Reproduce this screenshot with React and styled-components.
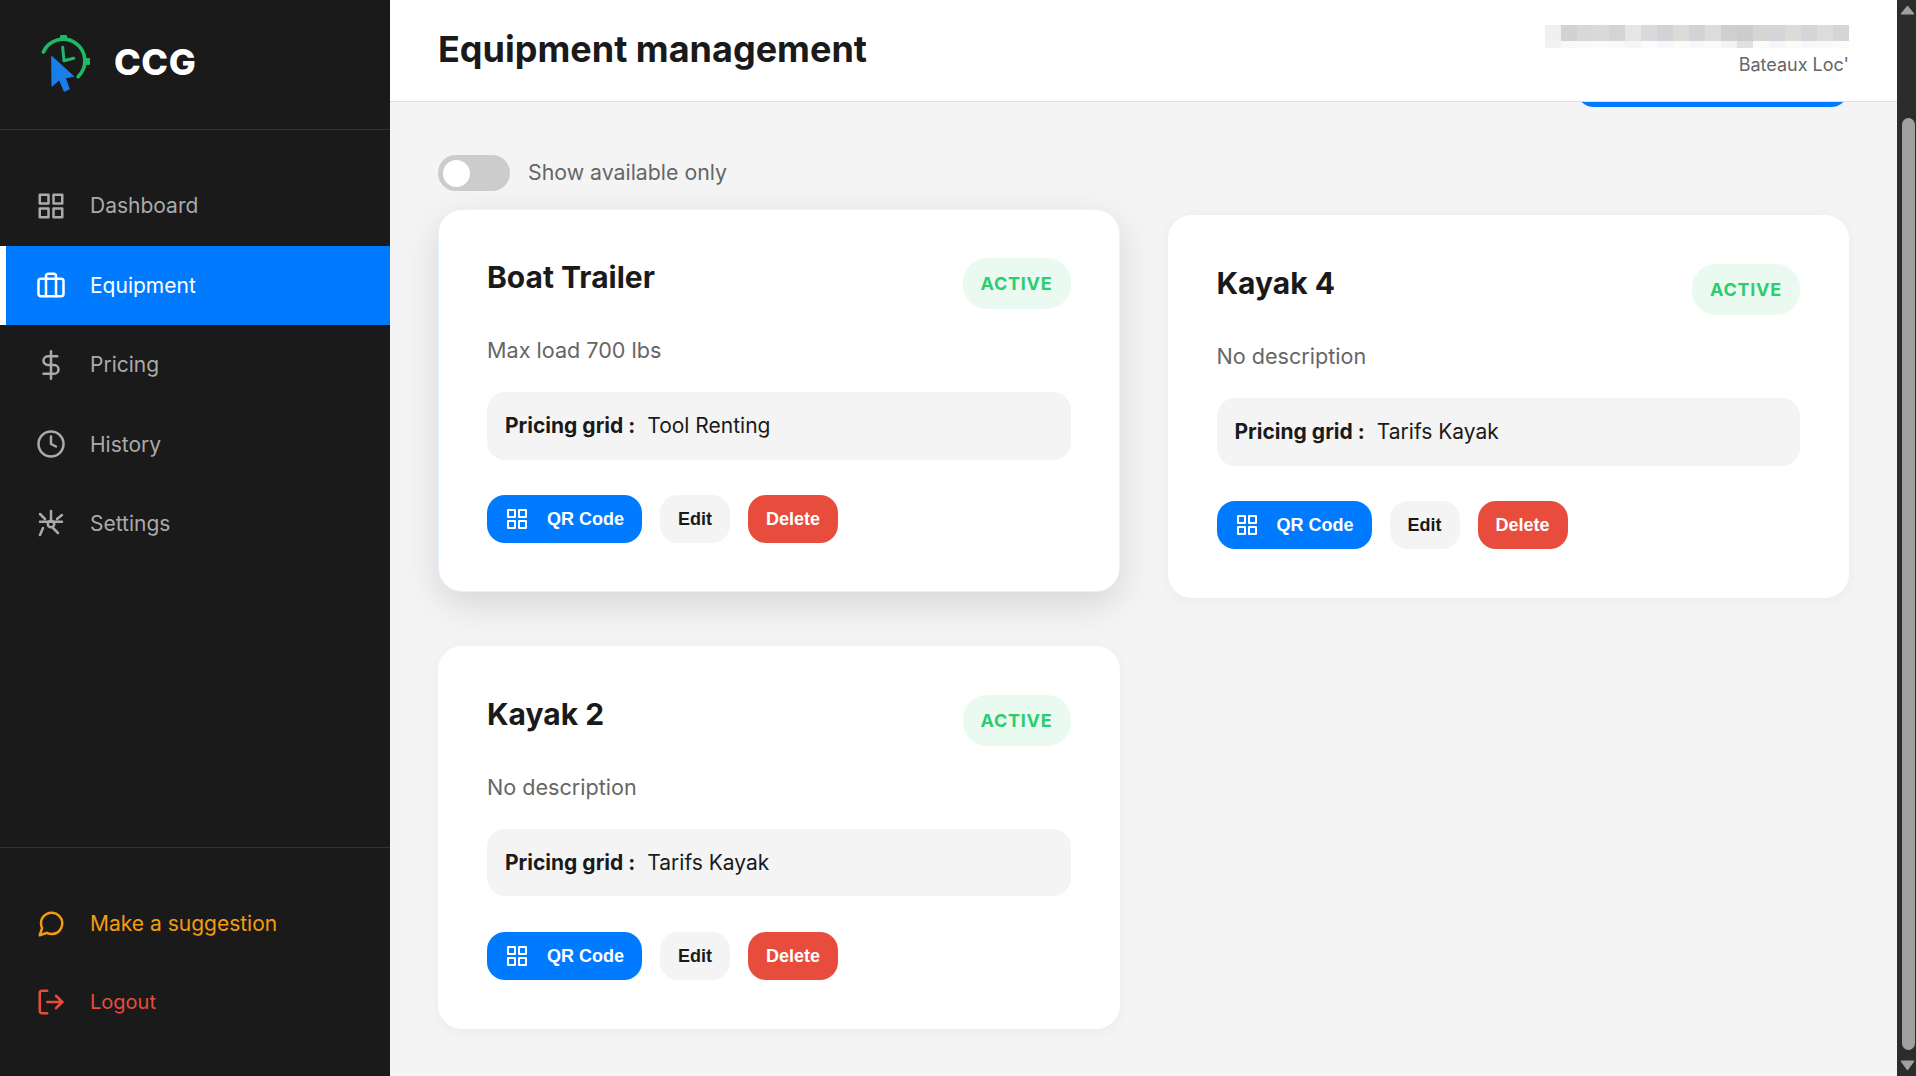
import React from 'react';
import styled, { createGlobalStyle } from 'styled-components';
import { FiGrid, FiBriefcase, FiDollarSign, FiClock, FiMessageCircle, FiLogOut } from 'react-icons/fi';

const GlobalStyle = createGlobalStyle`
  html, body {
    margin: 0;
    padding: 0;
    height: 100%;
    overflow: hidden;
    background: #f4f4f4;
  }
  * {
    box-sizing: border-box;
  }
  body {
    font-family: Inter, "Noto Sans", sans-serif;
    color: #1a1a1a;
  }
`;

const Page = styled.div`
  display: flex;
  height: 1076px;
  overflow: hidden;
`;

// Sidebar
const Sidebar = styled.aside`
  width: 390px;
  flex-shrink: 0;
  display: flex;
  flex-direction: column;
  justify-content: space-between;
  background: #1a1a1a;
`;

const Brand = styled.div`
  height: 130px;
  display: flex;
  align-items: center;
  gap: 18px;
  padding: 0 36px 5px;
  border-bottom: 1px solid #333;
`;

const LogoMark = styled.svg`
  margin-top: 2px;
`;

const BrandName = styled.span`
  font-size: 36px;
  font-weight: 800;
  letter-spacing: 0.6px;
  color: #fff;
`;

const Nav = styled.nav`
  display: flex;
  flex-direction: column;
  padding-top: 36px;
  flex: 1;
`;

const BottomNav = styled.div`
  display: flex;
  flex-direction: column;
  padding: 36px 0 34.5px;
  border-top: 1px solid #333;
`;

const NavItem = styled.a`
  display: flex;
  align-items: center;
  gap: 24px;
  padding: ${({ $small }) => ($small ? '23px 30px 25px' : '24px 30px')};
  border-left: 6px solid ${({ $active }) => ($active ? '#fff' : 'transparent')};
  background: ${({ $active }) => ($active ? '#007bff' : 'transparent')};
  color: ${({ $active, $color }) => ($active ? '#fff' : $color || '#aaa')};
  font-size: ${({ $small }) => ($small ? '20px' : '21px')};
  line-height: ${({ $small }) => ($small ? '30px' : '31.5px')};
  svg {
    flex-shrink: 0;
  }
`;

// Header
const Main = styled.main`
  flex: 1;
  min-width: 0;
  display: flex;
  flex-direction: column;
`;

const Header = styled.header`
  height: 102px;
  flex-shrink: 0;
  display: flex;
  align-items: center;
  justify-content: space-between;
  padding: 0 48px;
  background: #fff;
  border-bottom: 1px solid #e0e0e0;
`;

const Title = styled.h1`
  margin: 0 0 4px;
  font-size: 36px;
  font-weight: 700;
  color: #1a1a1a;
`;

const Account = styled.div`
  display: flex;
  flex-direction: column;
  align-items: flex-end;
  margin-top: 1px;
`;

const Mosaic = styled.div`
  display: grid;
  grid-template-columns: repeat(19, 16px);
  grid-template-rows: 16px 7px;
`;

const Pixel = styled.span`
  background: ${({ $tone }) => $tone};
`;

const Company = styled.span`
  font-size: 18px;
  line-height: 27px;
  color: #666;
  margin-top: 3px;
`;

// Content
const Content = styled.div`
  flex: 1;
  overflow: hidden;
  padding: 0 48px;
`;

const TopActions = styled.div`
  display: flex;
  justify-content: flex-end;
  margin-top: -43px;
`;

const AddButton = styled.button`
  width: 273px;
  height: 48px;
  border: none;
  border-radius: 18px;
  background: #007bff;
`;

const FilterRow = styled.label`
  display: flex;
  align-items: center;
  gap: 18px;
  margin: 48px 0 24px;
  font-size: 21.3px;
  color: #666;
`;

const FilterText = styled.span`
  margin-bottom: 2px;
`;

const Toggle = styled.span`
  width: 72px;
  height: 36px;
  padding: 4.5px;
  border-radius: 18px;
  background: #ccc;
  display: flex;
`;

const Knob = styled.span`
  width: 27px;
  height: 27px;
  border-radius: 50%;
  background: #fff;
`;

const Grid = styled.div`
  display: grid;
  grid-template-columns: 1fr 1fr;
  gap: 48px;
  align-items: start;
`;

const Card = styled.article`
  padding: 48px;
  background: #fff;
  border-radius: 24px;
  border: 1.5px solid ${({ $hovered }) => ($hovered ? 'rgba(0, 123, 255, 0.1)' : 'transparent')};
  box-shadow: ${({ $hovered }) => ($hovered ? '0 12px 36px rgba(0, 0, 0, 0.12)' : '0 3px 15px rgba(0, 0, 0, 0.04)')};
  transform: ${({ $hovered }) => ($hovered ? 'translateY(-6px)' : 'none')};
`;

const CardHead = styled.div`
  display: flex;
  align-items: flex-start;
  justify-content: space-between;
  margin-bottom: 25px;
`;

const CardTitle = styled.h3`
  margin: 0;
  font-size: 30px;
  font-weight: 700;
  line-height: 38px;
  color: #1a1a1a;
`;

const Badge = styled.span`
  padding: 12px 18px;
  border-radius: 24px;
  background: #eafaf1;
  color: #2ecc71;
  font-size: 18px;
  font-weight: 700;
  line-height: 27px;
  letter-spacing: 0.75px;
`;

const Description = styled.p`
  margin: 0 0 25.6px;
  font-size: 21.6px;
  line-height: 32.4px;
  color: #666;
`;

const PricingBox = styled.div`
  display: flex;
  gap: 12px;
  padding: 18px;
  margin-bottom: 35.4px;
  border-radius: 18px;
  background: #f4f4f4;
  font-size: 21px;
  line-height: 31.5px;
`;

const PricingLabel = styled.strong`
  font-weight: 700;
`;

const Actions = styled.div`
  display: flex;
  gap: 18px;
`;

const ActionButton = styled.button`
  display: flex;
  align-items: center;
  gap: 18px;
  height: 48px;
  padding: 1px 18px 0;
  border: none;
  border-radius: 18px;
  background: ${({ $bg }) => $bg};
  color: ${({ $fg }) => $fg};
  font-family: "Liberation Sans", Arial, sans-serif;
  font-size: 18px;
  font-weight: 700;
`;

// Scrollbar of the window
const ScrollBar = styled.div`
  width: 19px;
  flex-shrink: 0;
  display: flex;
  flex-direction: column;
  align-items: flex-end;
  padding: 5px 1px 5px 0;
  background: #2c2c2c;
`;

const ScrollThumb = styled.div`
  width: 13px;
  height: 932px;
  margin: 103px 0 10px;
  border-radius: 7px;
  background: #a0a0a0;
`;

const TOP_PIXELS = ['#efefef', '#d3d2d0', '#d6d8db', '#dcdad8', '#d2d4d7', '#e6e6e4', '#d8dadd', '#d2d3d6', '#dcdbd7', '#d2d3d7', '#dbdcdc', '#cfcfcf', '#cccccc', '#d7d4d3', '#d3d5d8', '#dcdbd8', '#d4d5d9', '#dcdcdd', '#d5d4d7'];
const LOW_PIXELS = ['#f2f2f2', '#f8f8f8', '#f9fafa', '#fbfbfb', '#f9f9f9', '#f6f6f6', '#fcfcfc', '#f8f8f8', '#fbfbfa', '#f8f8f8', '#fafafa', '#f3f3f3', '#e0e1e3', '#fbfbfa', '#f6f6f6', '#fbfbfb', '#f8f8f9', '#f8f8f8', '#fbfbfb'];

const EQUIPMENT = [
  { name: 'Boat Trailer', description: 'Max load 700 lbs', grid: 'Tool Renting', hovered: true },
  { name: 'Kayak 4', description: 'No description', grid: 'Tarifs Kayak' },
  { name: 'Kayak 2', description: 'No description', grid: 'Tarifs Kayak' },
];

const Logo = () => (
  <LogoMark width="60" height="60" viewBox="36 33 60 60" fill="none">
    <path d="M43.4 52A21.7 21.7 0 1 1 78.1 76.7" stroke="#1fb866" strokeWidth="3.6" strokeLinecap="round" />
    <rect x="60" y="35" width="7" height="5" rx="1" fill="#1fb866" />
    <rect x="85" y="58" width="5" height="7" rx="1" fill="#1fb866" />
    <path d="M62.7 47.3L64 60.8L73.7 58.2" stroke="#1fb866" strokeWidth="3" strokeLinecap="round" strokeLinejoin="round" />
    <path d="M51.7 56.3L73.7 76.3L65.3 78L69.3 89L64.3 91.3L59.3 79.7L52 86.3Z" fill="#1a7ee8" stroke="#1a7ee8" strokeLinejoin="round" />
  </LogoMark>
);

const SettingsIcon = () => (
  <svg width="30" height="30" viewBox="0 0 24 24" fill="none" stroke="currentColor" strokeWidth="2" strokeLinecap="round">
    <circle cx="12" cy="12" r="2.6" />
    <path d="M12 1.6V8M3.2 4L7.2 8M20.8 4.8L16.8 8M3.2 10.2H20.8M5.6 15.2L3.2 20.8M13.6 15.2L17.6 19.2" />
  </svg>
);

const ArrowUp = () => (
  <svg width="15" height="10" viewBox="0 0 15 10">
    <path d="M7.5 1L14 9H1Z" fill="#a0a0a0" stroke="#a0a0a0" strokeLinejoin="round" />
  </svg>
);

const ArrowDown = () => (
  <svg width="15" height="11" viewBox="0 0 15 11">
    <path d="M1 1H14L7.5 10Z" fill="#a0a0a0" stroke="#a0a0a0" strokeLinejoin="round" />
  </svg>
);

const EquipmentCard = ({ item }) => (
  <Card $hovered={item.hovered}>
    <CardHead>
      <CardTitle>{item.name}</CardTitle>
      <Badge>ACTIVE</Badge>
    </CardHead>
    <Description>{item.description}</Description>
    <PricingBox>
      <PricingLabel>Pricing grid :</PricingLabel>
      <span>{item.grid}</span>
    </PricingBox>
    <Actions>
      <ActionButton $bg="#007bff" $fg="#fff">
        <FiGrid size={24} />
        QR Code
      </ActionButton>
      <ActionButton $bg="#f4f4f4" $fg="#1a1a1a">Edit</ActionButton>
      <ActionButton $bg="#e74c3c" $fg="#fff">Delete</ActionButton>
    </Actions>
  </Card>
);

const App = () => (
  <Page>
    <GlobalStyle />
    <Sidebar>
      <Brand>
        <Logo />
        <BrandName>CCG</BrandName>
      </Brand>
      <Nav>
        <NavItem><FiGrid size={30} />Dashboard</NavItem>
        <NavItem $active><FiBriefcase size={30} />Equipment</NavItem>
        <NavItem><FiDollarSign size={30} />Pricing</NavItem>
        <NavItem><FiClock size={30} />History</NavItem>
        <NavItem><SettingsIcon />Settings</NavItem>
      </Nav>
      <BottomNav>
        <NavItem $color="#f39c12"><FiMessageCircle size={30} />Make a suggestion</NavItem>
        <NavItem $color="#e74c3c" $small><FiLogOut size={30} />Logout</NavItem>
      </BottomNav>
    </Sidebar>
    <Main>
      <Header>
        <Title>Equipment management</Title>
        <Account>
          <Mosaic>
            {TOP_PIXELS.map((tone, i) => <Pixel key={i} $tone={tone} />)}
            {LOW_PIXELS.map((tone, i) => <Pixel key={i} $tone={tone} />)}
          </Mosaic>
          <Company>Bateaux Loc'</Company>
        </Account>
      </Header>
      <Content>
        <TopActions>
          <AddButton aria-label="Add equipment" />
        </TopActions>
        <FilterRow>
          <Toggle><Knob /></Toggle>
          <FilterText>Show available only</FilterText>
        </FilterRow>
        <Grid>
          {EQUIPMENT.map((item) => <EquipmentCard key={item.name} item={item} />)}
        </Grid>
      </Content>
    </Main>
    <ScrollBar>
      <ArrowUp />
      <ScrollThumb />
      <ArrowDown />
    </ScrollBar>
  </Page>
);

export default App;
